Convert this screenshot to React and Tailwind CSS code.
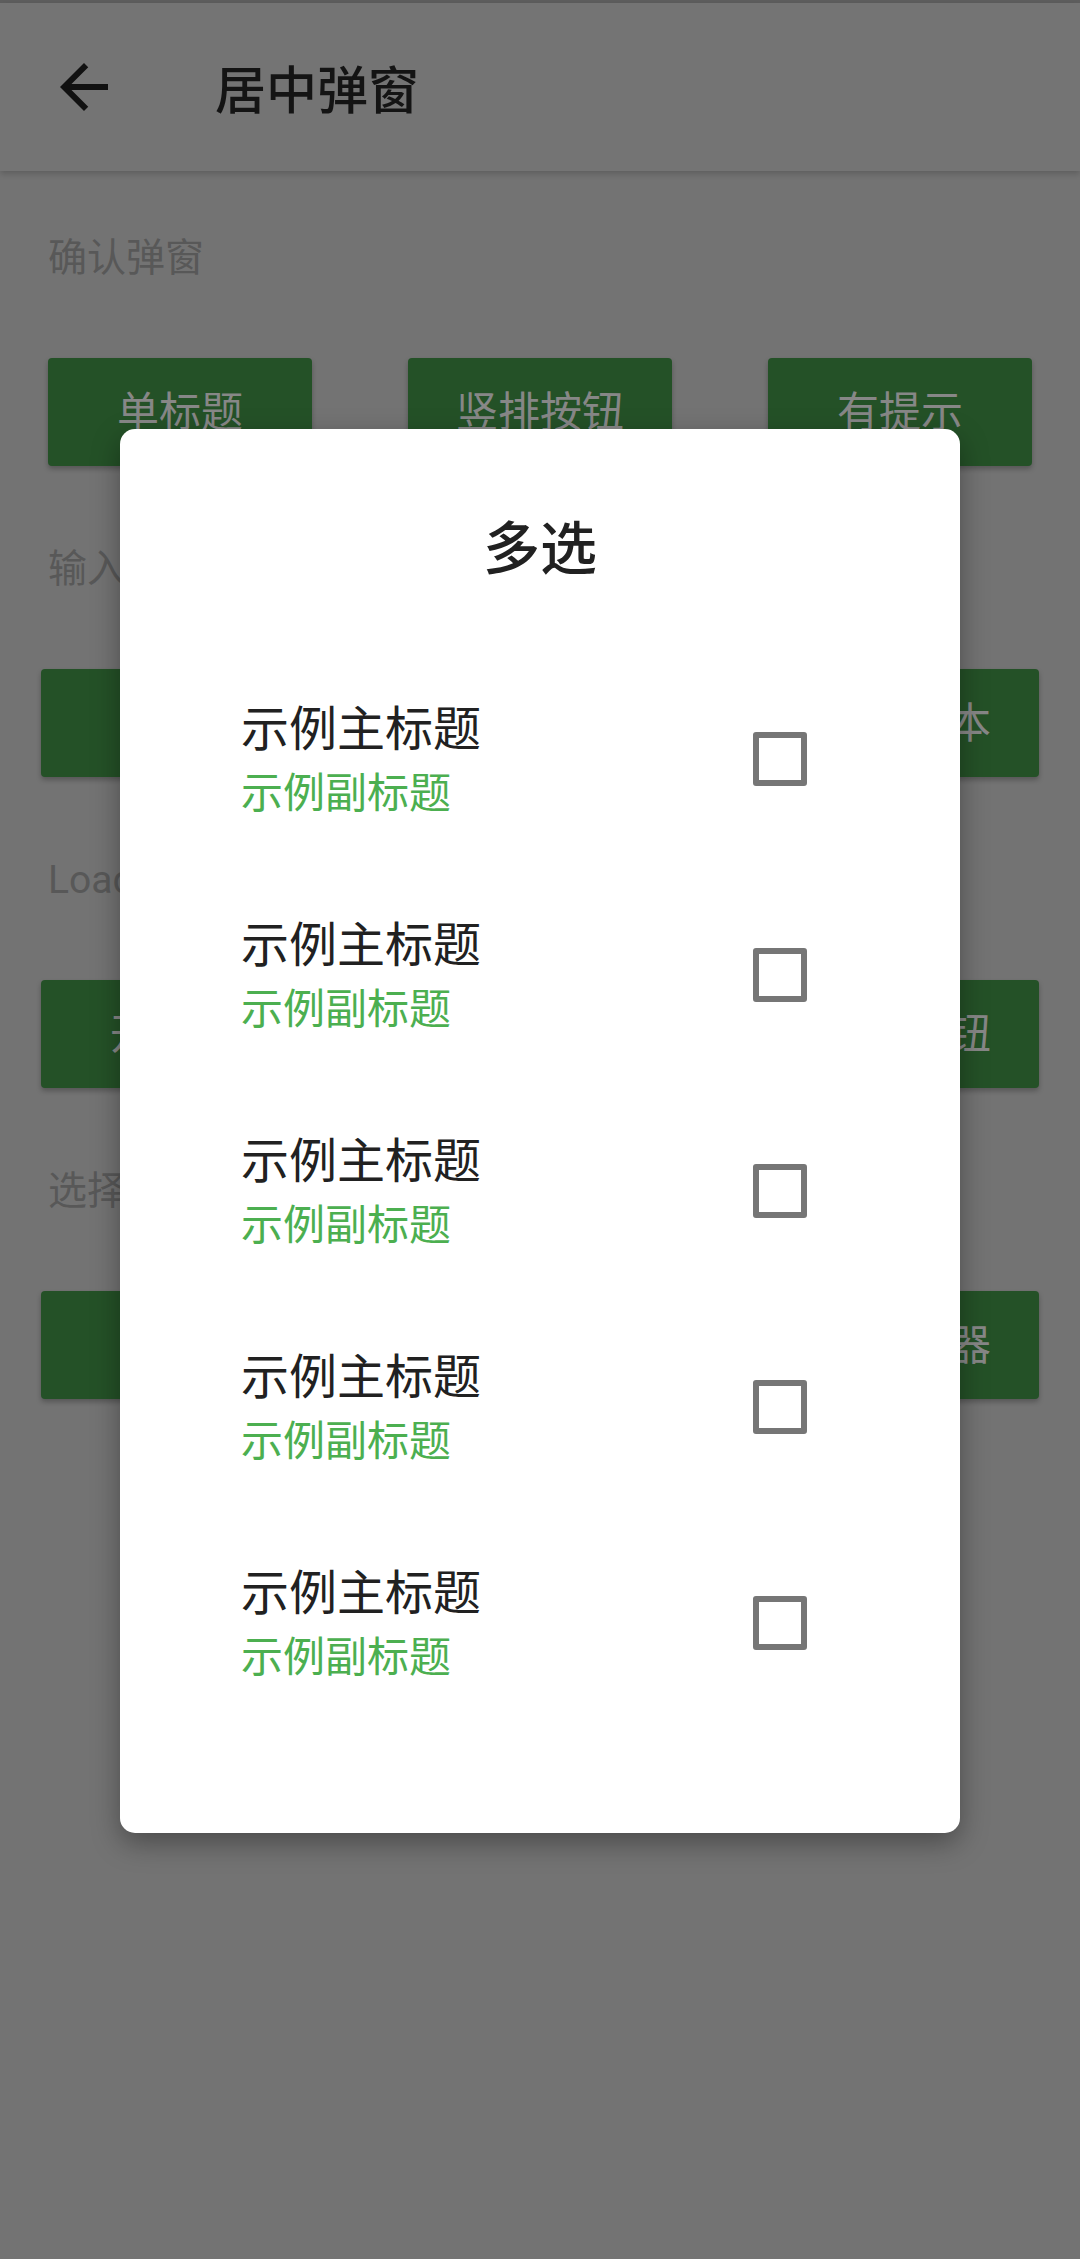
import React from 'react'

const rows = [
  { label: '确认弹窗', buttons: ['单标题', '竖排按钮', '有提示'], wide: false },
  { label: '输入弹窗', buttons: ['单行', '密码输入', '多行文本'], wide: true },
  { label: 'Loading弹窗', buttons: ['开启中', '无按钮', '取消按钮'], wide: true },
  { label: '选择弹窗', buttons: ['单选', '多选', '倒计时器'], wide: true },
]

const items = [1, 2, 3, 4, 5]

function ArrowBack() {
  return (
    <svg viewBox="0 0 24 24" className="w-[72px] h-[72px]" fill="#111">
      <path d="M20 11H7.83l5.59-5.59L12 4l-8 8 8 8 1.41-1.41L7.83 13H20v-2z" />
    </svg>
  )
}

function CheckRow() {
  return (
    <div className="flex h-[216px] items-center justify-between pl-[121px] pr-[153px]">
      <div className="flex flex-col">
        <span className="text-[48px] leading-[64px] text-[#212121]">示例主标题</span>
        <span className="text-[42px] leading-[64px] text-[#4caf50]">示例副标题</span>
      </div>
      <div className="mb-[6px] h-[54px] w-[54px] rounded-[3px] border-[6px] border-[#767676]" />
    </div>
  )
}

export default function App() {
  return (
    <div className="relative h-[2259px] w-[1080px] overflow-hidden bg-[#737373] font-[Roboto,'Noto_Sans_CJK_SC',sans-serif]">
      <div className="h-[3px] bg-[#5e5e5e]" />

      {/* app bar */}
      <div className="relative z-10 flex h-[168px] items-center bg-[#747474] shadow-[0_3px_6px_rgba(0,0,0,0.18)]">
        <div className="ml-[48px]">
          <ArrowBack />
        </div>
        <span className="ml-[95px] pt-[10px] text-[51px] font-medium text-[#141414]">居中弹窗</span>
      </div>

      {/* page content under the scrim */}
      <div className="pt-[57px]">
        {rows.map((row, i) => (
          <div key={row.label} className={i > 0 ? 'mt-[73px]' : ''}>
            <div className="pl-[48px] text-[39px] leading-[60px] text-[#585858]">{row.label}</div>
            <div
              className={
                row.wide
                  ? 'mt-[70px] flex justify-between px-[41px]'
                  : 'mt-[70px] flex justify-between px-[48px]'
              }
            >
              {row.buttons.map((b) => (
                <div
                  key={b}
                  className="flex h-[108px] w-[264px] items-center justify-center rounded-[4px] bg-[#245127] text-[42px] text-[#878787] shadow-[0_3px_5px_rgba(0,0,0,0.25)]"
                >
                  {b}
                </div>
              ))}
            </div>
          </div>
        ))}
      </div>

      {/* dialog */}
      <div className="absolute left-[120px] top-[429px] w-[840px] rounded-[15px] bg-white pb-[99px] pt-[81px] shadow-[0_10px_28px_rgba(0,0,0,0.35)]">
        <div className="text-center text-[57px] font-medium leading-[80px] text-[#212121]">多选</div>
        <div className="mt-[64px]">
          {items.map((n) => (
            <CheckRow key={n} />
          ))}
        </div>
      </div>
    </div>
  )
}
